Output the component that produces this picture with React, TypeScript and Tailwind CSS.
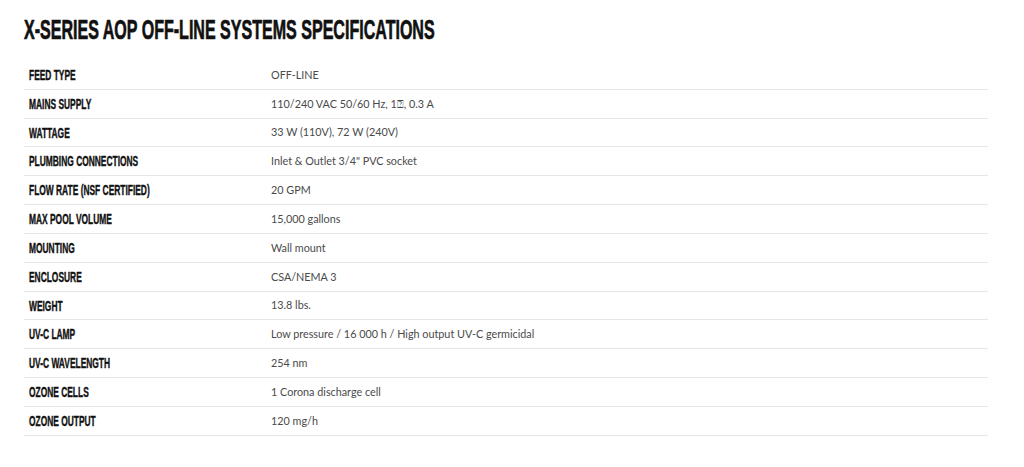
const specs: [string, string][] = [
  ['FEED TYPE', 'OFF-LINE'],
  ['MAINS SUPPLY', '110/240 VAC 50/60 Hz, 1⍰, 0.3 A'],
  ['WATTAGE', '33 W (110V), 72 W (240V)'],
  ['PLUMBING CONNECTIONS', 'Inlet & Outlet 3/4" PVC socket'],
  ['FLOW RATE (NSF CERTIFIED)', '20 GPM'],
  ['MAX POOL VOLUME', '15,000 gallons'],
  ['MOUNTING', 'Wall mount'],
  ['ENCLOSURE', 'CSA/NEMA 3'],
  ['WEIGHT', '13.8 lbs.'],
  ['UV-C LAMP', 'Low pressure / 16 000 h / High output UV-C germicidal'],
  ['UV-C WAVELENGTH', '254 nm'],
  ['OZONE CELLS', '1 Corona discharge cell'],
  ['OZONE OUTPUT', '120 mg/h'],
];

export default function App() {
  return (
    <div className="min-h-screen bg-white pl-6 pt-[15px] pr-9">
      {/* Title */}
      <h1 className="font-['Liberation_Sans',sans-serif] text-[28px] font-bold leading-[30px] text-[#111] whitespace-nowrap [-webkit-text-stroke:0.7px_#111]">
        <span className="inline-block origin-left scale-x-[0.573]">X-SERIES AOP OFF-LINE SYSTEMS SPECIFICATIONS</span>
      </h1>

      {/* Spec table */}
      <div className="mt-4 w-[964px]">
        {specs.map(([label, value]) => (
          <div key={label} className="flex h-[28.83px] items-center border-b border-[#e6e6e6]">
            <div className="w-[247px] pl-[5px] pt-px font-['Liberation_Sans',sans-serif] text-[14px] font-bold text-[#111] whitespace-nowrap [-webkit-text-stroke:0.4px_#111]">
              <span className="inline-block origin-left scale-x-[0.6]">{label}</span>
            </div>
            <div className="font-['Lato',sans-serif] text-[10.8px] text-[#4a4a4a]">{value}</div>
          </div>
        ))}
      </div>
    </div>
  );
}
